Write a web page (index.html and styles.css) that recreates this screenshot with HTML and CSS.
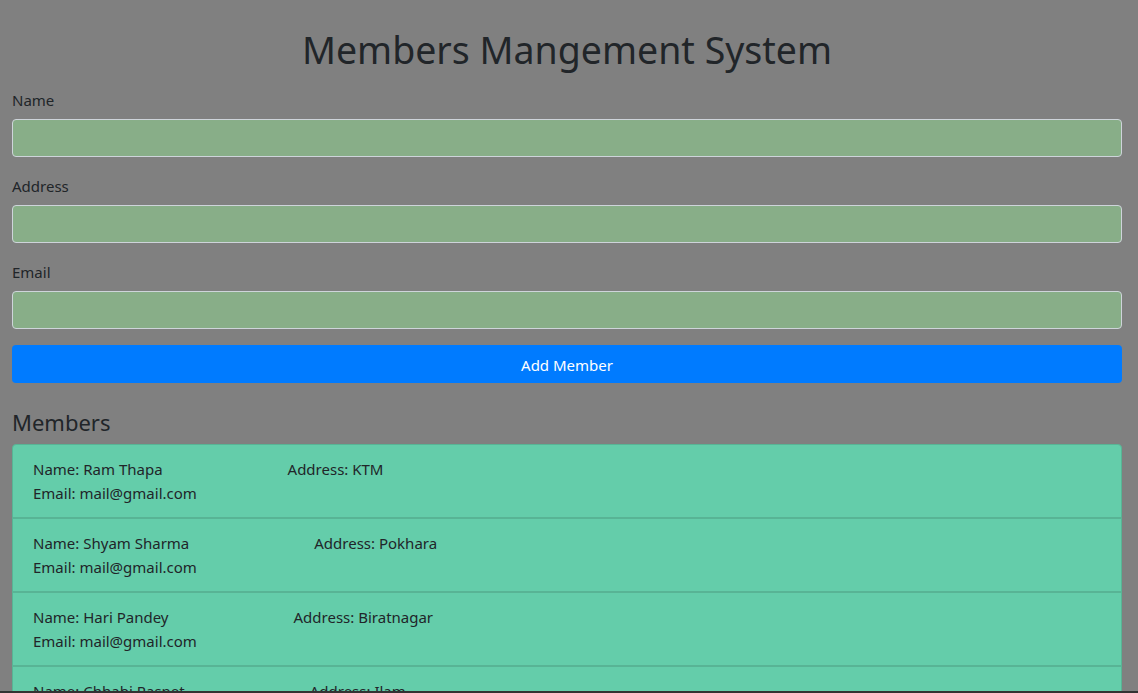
FILE: index.html
```html
<!DOCTYPE html>
<html lang="en">
<head>
<meta charset="utf-8">
<title>Members Mangement System</title>
<link rel="stylesheet" href="styles.css">
</head>
<body>
<div class="container">
  <h1 class="title">Members Mangement System</h1>
  <form class="form">
    <div class="form-group">
      <label for="name">Name</label>
      <input id="name" class="input" type="text">
    </div>
    <div class="form-group">
      <label for="address">Address</label>
      <input id="address" class="input" type="text">
    </div>
    <div class="form-group">
      <label for="email">Email</label>
      <input id="email" class="input" type="text">
    </div>
    <button type="button" class="btn">Add Member</button>
  </form>
  <h4 class="section-title">Members</h4>
  <ul class="list">
    <li class="item"><span class="name">Name: Ram Thapa</span><span class="addr">Address: KTM</span><br><span>Email: mail@gmail.com</span></li>
    <li class="item"><span class="name">Name: Shyam Sharma</span><span class="addr">Address: Pokhara</span><br><span>Email: mail@gmail.com</span></li>
    <li class="item"><span class="name">Name: Hari Pandey</span><span class="addr">Address: Biratnagar</span><br><span>Email: mail@gmail.com</span></li>
    <li class="item"><span class="name">Name: Chhabi Rasnet</span><span class="addr">Address: Ilam</span><br><span>Email: mail@gmail.com</span></li>
  </ul>
</div>
<div class="bottom-edge"></div>
</body>
</html>
```

FILE: styles.css
```css
html, body {
  margin: 0;
  padding: 0;
}
body {
  background: #808080;
  color: #212529;
  font-family: "Noto Sans", "Open Sans", sans-serif;
  font-size: 15px;
  line-height: 24px;
}
.container {
  padding: 0 16px 0 12px;
}
.title {
  margin: 0;
  padding-top: 24px;
  height: 51px;
  line-height: 51px;
  text-align: center;
  font-weight: 400;
  font-size: 37.5px;
  margin-bottom: 12px;
}
.form-group {
  margin-bottom: 16px;
}
label {
  display: block;
  margin-bottom: 8px;
  line-height: 24px;
  padding-top: 1px;
  height: 23px;
}
.input {
  display: block;
  box-sizing: border-box;
  width: 100%;
  height: 38px;
  border: 1px solid #ced4da;
  border-radius: 4px;
  background: #88ae88;
  margin: 0;
}
.btn {
  display: block;
  width: 100%;
  height: 38px;
  border: 0;
  border-radius: 4px;
  background: #007bff;
  color: #fff;
  font-family: inherit;
  font-size: 15px;
  padding: 0;
  line-height: 40px;
}
.section-title {
  margin: 24px 0 8px;
  padding-top: 1px;
  height: 28px;
  font-weight: 400;
  font-size: 22px;
  line-height: 29px;
}
.list {
  list-style: none;
  margin: 0;
  padding: 0;
}
.item {
  background: #64cdaa;
  border: 1px solid #58b495;
  padding: 12px 20px;
}
.item:first-child {
  border-radius: 4px 4px 0 0;
}
.name {
  margin-right: 125px;
}
.bottom-edge {
  position: fixed;
  left: 0;
  right: 0;
  bottom: 0;
  height: 2px;
  background: #333;
}
```
